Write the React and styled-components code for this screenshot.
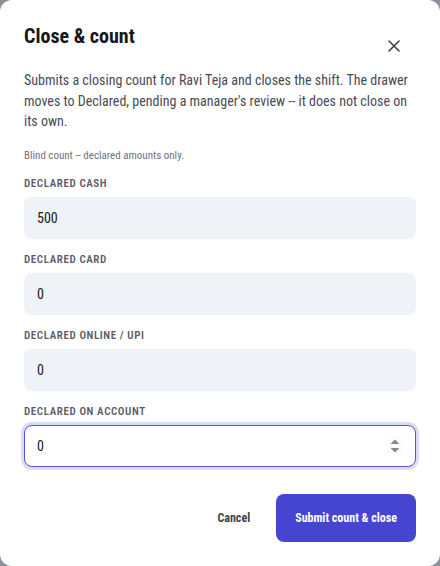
import React from "react";
import styled, { createGlobalStyle } from "styled-components";

const Global = createGlobalStyle`
  html, body { margin: 0; padding: 0; }
  body {
    background: #8f929b;
    font-family: Roboto, "Noto Sans", sans-serif;
    font-stretch: 87.5%;
  }
  * { box-sizing: border-box; }
`;

const Dialog = styled.div`
  width: 440px;
  height: 566px;
  background: #ffffff;
  border-radius: 12px;
  padding: 22px 24px 24px;
  display: flex;
  flex-direction: column;
`;

const Header = styled.div`
  display: flex;
  justify-content: space-between;
  align-items: flex-start;
`;

const Title = styled.h2`
  margin: 0;
  font-size: 20px;
  line-height: 28px;
  font-weight: 700;
  color: #18181b;
`;

const CloseButton = styled.button`
  margin-top: 10px;
  margin-right: 8px;
  width: 28px;
  height: 28px;
  border: none;
  background: transparent;
  display: flex;
  align-items: center;
  justify-content: center;
  padding: 0;
  color: #3f3f46;
  cursor: pointer;
`;

const Description = styled.p`
  margin: 10px 0 0;
  font-size: 14px;
  line-height: 20.5px;
  color: #4b4b55;
`;

const Hint = styled.p`
  margin: 16px 0 0;
  font-size: 11px;
  line-height: 16px;
  color: #71717a;
`;

const Fields = styled.div`
  margin-top: 13px;
  display: flex;
  flex-direction: column;
  gap: 14px;
`;

const Field = styled.label`
  display: flex;
  flex-direction: column;
  gap: 6px;
`;

const Label = styled.span`
  font-size: 11px;
  line-height: 14px;
  font-weight: 600;
  letter-spacing: 0.6px;
  text-transform: uppercase;
  color: #5c5c68;
`;

const Input = styled.input`
  height: 42px;
  width: 100%;
  border-radius: 8px;
  border: 1px solid ${(p) => (p.$focused ? "#5552d9" : "transparent")};
  background: ${(p) => (p.$focused ? "#ffffff" : "#eff2f7")};
  box-shadow: ${(p) => (p.$focused ? "0 0 0 3px #dcdbf8" : "none")};
  padding: 0 12px;
  font-family: inherit;
  font-stretch: inherit;
  font-size: 14px;
  color: #18181b;
  outline: none;
`;

const Footer = styled.div`
  margin-top: 27px;
  display: flex;
  justify-content: flex-end;
  align-items: center;
  gap: 10px;
`;

const Button = styled.button`
  height: 48px;
  padding: 0 ${(p) => (p.$primary ? "19px" : "16px")};
  border-radius: 8px;
  border: none;
  font-family: inherit;
  font-stretch: inherit;
  font-size: 12px;
  font-weight: 700;
  background: ${(p) => (p.$primary ? "#4545d1" : "transparent")};
  color: ${(p) => (p.$primary ? "#ffffff" : "#3f3f46")};
  cursor: pointer;
`;

const fields = [
  { label: "Declared cash", value: "500" },
  { label: "Declared card", value: "0" },
  { label: "Declared online / UPI", value: "0" },
  { label: "Declared on account", value: "0", focused: true },
];

export default function App() {
  return (
    <>
      <Global />
      <Dialog>
        <Header>
          <Title>Close &amp; count</Title>
          <CloseButton aria-label="Close">
            <svg width="14" height="14" viewBox="0 0 14 14" fill="none">
              <path d="M2 2L12 12M12 2L2 12" stroke="#3f3f46" strokeWidth="1.6" strokeLinecap="round" />
            </svg>
          </CloseButton>
        </Header>
        <Description>
          Submits a closing count for Ravi Teja and closes the shift. The drawer moves to
          Declared, pending a manager's review -- it does not close on its own.
        </Description>
        <Hint>Blind count -- declared amounts only.</Hint>
        <Fields>
          {fields.map((f) => (
            <Field key={f.label}>
              <Label>{f.label}</Label>
              <Input
                type="number"
                defaultValue={f.value}
                $focused={f.focused}
                autoFocus={f.focused}
              />
            </Field>
          ))}
        </Fields>
        <Footer>
          <Button>Cancel</Button>
          <Button $primary>Submit count &amp; close</Button>
        </Footer>
      </Dialog>
    </>
  );
}
